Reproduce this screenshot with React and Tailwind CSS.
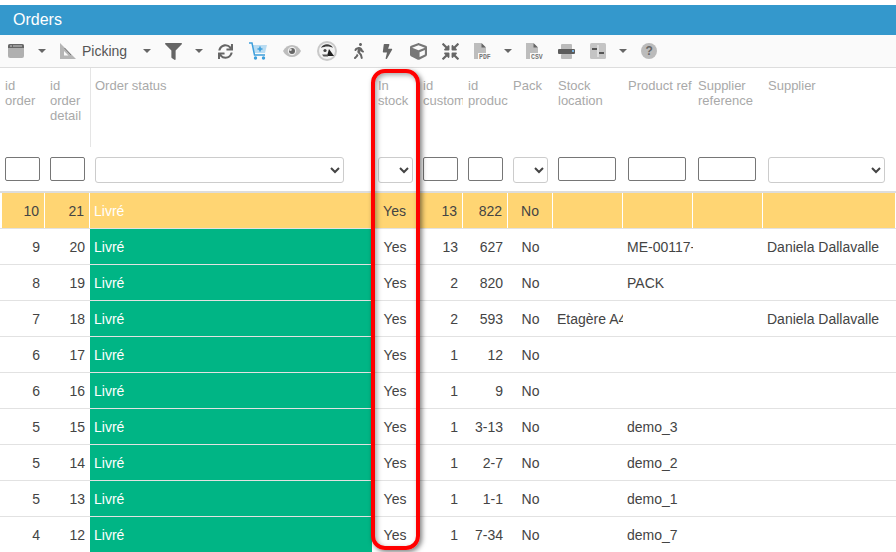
import { FaFilter, FaSync, FaWalking, FaBolt, FaCube, FaCompressArrowsAlt } from "react-icons/fa";

const COLS = "grid grid-cols-[2px_43px_45px_282px_46px_45px_45px_45px_70px_70px_70px_133px]";

const ROWS = [
  ["10", "21", "Yes", "13", "822", "No", "", "", "", ""],
  ["9", "20", "Yes", "13", "627", "No", "", "ME-00117-", "", "Daniela Dallavalle"],
  ["8", "19", "Yes", "2", "820", "No", "", "PACK", "", ""],
  ["7", "18", "Yes", "2", "593", "No", "Etagère A4", "", "", "Daniela Dallavalle"],
  ["6", "17", "Yes", "1", "12", "No", "", "", "", ""],
  ["6", "16", "Yes", "1", "9", "No", "", "", "", ""],
  ["5", "15", "Yes", "1", "3-13", "No", "", "demo_3", "", ""],
  ["5", "14", "Yes", "1", "2-7", "No", "", "demo_2", "", ""],
  ["5", "13", "Yes", "1", "1-1", "No", "", "demo_1", "", ""],
  ["4", "12", "Yes", "1", "7-34", "No", "", "demo_7", "", ""],
];

function Caret({ ml }) {
  return <span className={`${ml} shrink-0 w-0 h-0 border-x-[4px] border-x-transparent border-t-[4px] border-t-[#666]`} />;
}

function WindowIcon() {
  return (
    <svg width="16" height="16" viewBox="0 0 16 16">
      <rect y="1" width="16" height="14" rx="2" fill="#b0b0b0" />
      <path fill="#666" d="M2 1 H14 A2 2 0 0 1 16 3 V5 H0 V3 A2 2 0 0 1 2 1 Z" />
      <rect x="2" y="2.500" width="2" height="1" fill="#ccc" />
      <rect x="5" y="2.500" width="9" height="1" fill="#ccc" />
    </svg>
  );
}

function Triangle() {
  return (
    <svg width="16" height="16" viewBox="0 0 16 16">
      <path fillRule="evenodd" fill="#b5b5b5" d="M0 0 L16 16 H0 Z M4 8 V12.500 H8.500 Z" />
      <path fill="none" stroke="#777" strokeWidth="1" d="M4.500 5 L11 12" />
    </svg>
  );
}

function CartIcon() {
  return (
    <svg width="18" height="18" viewBox="0 0 18 18">
      <path fill="#b9dcf2" d="M4 3 H18 L16 11 H5 Z" />
      <path fill="none" stroke="#3d9fdc" strokeWidth="1.500" d="M0 1 H3 L5.500 13 H16" />
      <path fill="#3d9fdc" d="M10.200 4.500 H11.800 V6.200 H13.500 V7.800 H11.800 V9.500 H10.200 V7.800 H8.500 V6.200 H10.200 Z" />
      <circle cx="6.500" cy="16" r="1.700" fill="#3d9fdc" />
      <circle cx="14.500" cy="16" r="1.700" fill="#3d9fdc" />
    </svg>
  );
}

function EyeIcon() {
  return (
    <svg width="18" height="12" viewBox="0 0 18 12">
      <path fill="#bdbdbd" d="M0 6 C4 -2 14 -2 18 6 C14 14 4 14 0 6 Z" />
      <circle cx="9" cy="6" r="4.200" fill="#efefef" />
      <circle cx="9" cy="6" r="3" fill="#666" />
      <circle cx="7.500" cy="4.800" r="1.300" fill="#ddd" />
    </svg>
  );
}

function FileIcon({ label }) {
  return (
    <svg width="17" height="17" viewBox="0 0 17 17">
      <path fill="#bdbdbd" d="M0 0 H7 L12 5 V16 H0 Z" />
      <path fill="#666" d="M7.500 0 L12 4.500 H7.500 Z" />
      <rect x="4" y="10" width="13" height="7" fill="#fafafa" />
      <text x="5" y="16" fontSize="6.500" fontWeight="700" fill="#777" fontFamily="Liberation Mono">{label}</text>
    </svg>
  );
}

function Parrot() {
  return (
    <svg width="20" height="20" viewBox="0 0 20 20">
      <circle cx="10" cy="10" r="10" fill="#c9c9c9" />
      <circle cx="10" cy="10" r="8" fill="#f2f2f2" />
      <path fill="#3a3a3a" d="M4 7 C6 2 14 2 16 7 C13 5 8 5 4 7 Z" />
      <path fill="#1f1f1f" d="M12 8 L17 15 H10 Z" />
      <circle cx="8" cy="9.500" r="1.600" fill="#444" />
      <path fill="#555" d="M5 13.500 H11 V15.500 H6.500 Z" />
    </svg>
  );
}

function PrintIcon() {
  return (
    <svg width="17" height="17" viewBox="0 0 17 17">
      <path fill="#bbb" d="M4 1 H13 A1 1 0 0 1 14 2 V6 H3 V2 A1 1 0 0 1 4 1 Z" />
      <rect x="0" y="6" width="17" height="5" rx="1" fill="#5c5c5c" />
      <rect x="3" y="11" width="11" height="5" rx="1" fill="#bbb" />
      <rect x="14" y="7" width="2" height="2" fill="#7ab3e0" />
    </svg>
  );
}

function Columns() {
  return (
    <svg width="16" height="16" viewBox="0 0 16 16">
      <rect width="16" height="16" rx="1.500" fill="#c4c4c4" />
      <rect x="7.500" y="2" width="1" height="12" fill="#f5f5f5" />
      <rect x="2" y="5" width="5" height="2" fill="#555" />
      <rect x="9" y="9" width="5" height="2" fill="#555" />
    </svg>
  );
}

function HelpIcon() {
  return (
    <span className="ml-[14px] w-4 h-4 rounded-full bg-[#bbb] text-[#666] text-[12px] font-bold leading-4 text-center">?</span>
  );
}

function Header({ children }) {
  return <div className="pl-[5px] pt-[10px] h-[79px] text-[13px] leading-[15px] text-[#a9a9a9] overflow-hidden">{children}</div>;
}

function TextFilter({ w }) {
  return <input className={`${w} h-6 bg-white border border-[#767676] rounded-[2px]`} />;
}

function SelectFilter({ w }) {
  return (
    <div className={`${w} h-[26px] bg-white border border-[#ccc] rounded-[3px] flex items-center justify-end pr-[3px]`}>
      <svg width="10" height="7" viewBox="0 0 10 7">
        <path d="M1 1 L5 5 L9 1" fill="none" stroke="#444" strokeWidth="2" />
      </svg>
    </div>
  );
}

function Row({ cells, first }) {
  const [order, detail, stock, customer, product, pack, location, ref, supRef, supplier] = cells;
  const bg = first ? "bg-[#ffd573] border-r border-white" : "";
  const base = `h-[35px] pt-[2px] flex items-center overflow-hidden whitespace-nowrap ${bg}`;
  const status = first ? "bg-[#ffd573]" : "bg-[#00b585]";
  return (
    <div className={`${COLS} h-9 border-b border-[#e2e2e2]`}>
      <div />
      <div className={`${base} justify-end pr-[5px]`}>{order}</div>
      <div className={`${base} justify-end pr-[5px]`}>{detail}</div>
      <div className={`h-[35px] pt-[2px] flex items-center pl-[4px] text-white ${status}`}>Livré</div>
      <div className={`${base} justify-center`}>{stock}</div>
      <div className={`${base} justify-end pr-[5px]`}>{customer}</div>
      <div className={`${base} justify-end pr-[5px]`}>{product}</div>
      <div className={`${base} justify-center`}>{pack}</div>
      <div className={`${base} pl-[4px]`}>{location}</div>
      <div className={`${base} pl-[4px]`}>{ref}</div>
      <div className={`${base} pl-[4px]`}>{supRef}</div>
      <div className={`${base} pl-[4px]`}>{supplier}</div>
    </div>
  );
}

export default function App() {
  return (
    <div className="relative w-[896px] h-[552px] overflow-hidden bg-white pt-[5px] text-[14px] text-[#444] font-['Liberation_Sans',Arial,sans-serif]">
      <div className="h-[30px] bg-[#3498cc] pl-[13px] flex items-center text-[16px] text-white">Orders</div>

      <div className="h-[33px] bg-[#fafafa] border-b border-[#ddd] flex items-center pl-[8px]">
        <WindowIcon />
        <Caret ml="ml-[14px]" />
        <span className="ml-[14px]"><Triangle /></span>
        <span className="ml-[6px] text-[14px] text-[#555]">Picking</span>
        <Caret ml="ml-[16px]" />
        <FaFilter size={17} className="ml-[14px] text-[#666]" />
        <Caret ml="ml-[13px]" />
        <FaSync size={15} className="ml-[15px] text-[#666]" />
        <span className="ml-[16px]"><CartIcon /></span>
        <span className="ml-[16px]"><EyeIcon /></span>
        <span className="ml-[16px]"><Parrot /></span>
        <FaWalking size={16} className="ml-[14px] text-[#666]" />
        <FaBolt size={15} className="ml-[13px] text-[#666]" />
        <FaCube size={17} className="ml-[15px] text-[#777]" />
        <FaCompressArrowsAlt size={17} className="ml-[15px] text-[#666]" />
        <span className="ml-[15px]"><FileIcon label="PDF" /></span>
        <Caret ml="ml-[13px]" />
        <span className="ml-[14px]"><FileIcon label="CSV" /></span>
        <span className="ml-[15px]"><PrintIcon /></span>
        <span className="ml-[15px]"><Columns /></span>
        <Caret ml="ml-[13px]" />
        <HelpIcon />
      </div>

      <div className={COLS}>
        <div />
        <div className="-ml-[2px]"><Header>id<br />order</Header></div>
        <Header>id<br />order<br />detail</Header>
        <div className="border-l border-[#e5e5e5]"><div className="-ml-[1px]"><Header>Order status</Header></div></div>
        <div className="pl-[1px]"><Header>In<br />stock</Header></div>
        <Header>id<br />customer</Header>
        <Header>id<br />product</Header>
        <Header>Pack</Header>
        <Header>Stock<br />location</Header>
        <div className="whitespace-nowrap overflow-hidden"><Header>Product ref</Header></div>
        <Header>Supplier<br />reference</Header>
        <Header>Supplier</Header>
      </div>

      <div className={`${COLS} h-[46px] border-b-2 border-[#ddd] pt-[10px]`}>
        <div />
        <div className="pl-[3px]"><TextFilter w="w-[35px]" /></div>
        <div className="pl-[5px]"><TextFilter w="w-[35px]" /></div>
        <div className="pl-[5px]"><SelectFilter w="w-[249px]" /></div>
        <div className="pl-[6px]"><SelectFilter w="w-[35px]" /></div>
        <div className="pl-[5px]"><TextFilter w="w-[35px]" /></div>
        <div className="pl-[5px]"><TextFilter w="w-[35px]" /></div>
        <div className="pl-[5px]"><SelectFilter w="w-[35px]" /></div>
        <div className="pl-[5px]"><TextFilter w="w-[58px]" /></div>
        <div className="pl-[5px]"><TextFilter w="w-[58px]" /></div>
        <div className="pl-[5px]"><TextFilter w="w-[58px]" /></div>
        <div className="pl-[5px]"><SelectFilter w="w-[117px]" /></div>
      </div>

      {ROWS.map((cells, i) => <Row key={i} cells={cells} first={i === 0} />)}

      {/* cadre rouge autour de la colonne */}
      <div className="absolute left-[371px] top-[69px] w-[49px] h-[481px] border-[4px] border-[#f00] rounded-[14px] shadow-[2px_2px_5px_rgba(0,0,0,0.5),inset_2px_2px_5px_rgba(0,0,0,0.35)]" />
    </div>
  );
}
